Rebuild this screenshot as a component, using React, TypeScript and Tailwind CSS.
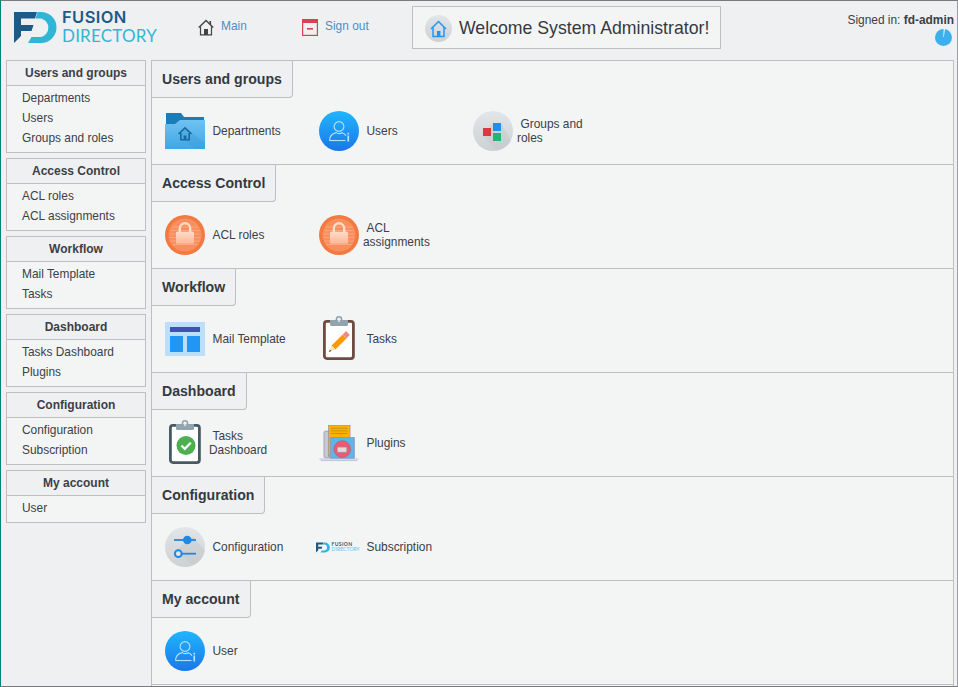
import React from "react";

const Grad = ({ id, from, to }: { id: string; from: string; to: string }) => (
  <defs>
    <linearGradient id={id} x1="0" y1="0" x2="0" y2="1">
      <stop offset="0" stopColor={from} />
      <stop offset="1" stopColor={to} />
    </linearGradient>
  </defs>
);

const UserIconFixed = ({ uid }: { uid: string }) => (
  <svg width="40" height="40" viewBox="0 0 40 40">
    <Grad id={uid} from="#1fb6fe" to="#1b76e8" />
    <circle cx="20" cy="20" r="20" fill={`url(#${uid})`} />
    <g fill="none" stroke="#b8e2fc" strokeWidth="1.1">
      <circle cx="20" cy="15.5" r="4.9" />
      <path d="M10.5 29.5 C10.5 25 13.5 22.6 17.2 21.6 C19 22.8 21.3 22.8 23.2 21.8 C24.8 22.4 26 23.2 27 24.6" />
      <path d="M10.5 29.5 H26.5" />
    </g>
    <rect x="28.4" y="24.5" width="1.7" height="6" fill="#b8e2fc" />
    <rect x="28.4" y="21.8" width="1.7" height="1.7" fill="#b8e2fc" />
  </svg>
);

const LockIcon = ({ uid }: { uid: string }) => (
  <svg width="40" height="40" viewBox="0 0 40 40">
    <Grad id={uid} from="#ffdcc8" to="#fbb795" />
    <circle cx="20" cy="20" r="20" fill="#f27a40" />
    <circle cx="20" cy="20" r="16.5" fill="#f98e5f" />
    <g stroke="#fbab85" strokeWidth="0.9">
      <path d="M7 12 H33 M5.5 15.5 H34.5 M4.5 19 H35.5 M4.5 22.5 H35.5 M5.5 26 H34.5 M7.5 29.5 H32.5" />
    </g>
    <path d="M14.8 17 V13.5 A5.2 5.2 0 0 1 25.2 13.5 V17" fill="none" stroke="#ffdcc8" strokeWidth="2.4" />
    <rect x="11" y="16.8" width="18" height="12" rx="1" fill={`url(#${uid})`} />
  </svg>
);

const GroupsIcon = () => (
  <svg width="40" height="40" viewBox="0 0 40 40">
    <Grad id="gr1" from="#e3e6e8" to="#cdd1d4" />
    <circle cx="20" cy="20" r="20" fill="url(#gr1)" />
    <path d="M10 25 L20 12 L28 12 L38 30 A20 20 0 0 1 24 39.5 Z" fill="#c3c7cb" opacity="0.5" />
    <rect x="10" y="17" width="8" height="8" fill="#dc3545" />
    <rect x="20" y="12" width="8" height="8" fill="#1e90f0" />
    <rect x="20" y="22" width="8" height="8" fill="#22b573" />
  </svg>
);

const FolderIcon = () => (
  <svg width="40" height="36" viewBox="0 0 40 36">
    <Grad id="fo1" from="#70c2f2" to="#3fa6e5" />
    <path d="M1 0 H16 L19 4 H39 V12 H1 Z" fill="#1b7db8" />
    <path d="M0 36 V11 H10 L15 7 H40 V36 Z" fill="url(#fo1)" />
    <path d="M14 21 L20 15 L40 30 V36 H30 Z" fill="#3a9bd8" opacity="0.35" />
    <g fill="none" stroke="#176a9b" strokeWidth="1.6">
      <path d="M13.5 21 L20 14.8 L26.5 21" />
      <path d="M15.8 20 V26.8 H24.2 V20" />
    </g>
    <rect x="18.6" y="22.5" width="2.8" height="4.5" fill="#176a9b" />
  </svg>
);

const MailIcon = () => (
  <svg width="40" height="34" viewBox="0 0 40 34">
    <rect width="40" height="34" fill="#bbdefb" />
    <rect x="5" y="5" width="30" height="5" fill="#3f51b5" />
    <rect x="5" y="14" width="13" height="16" fill="#2196f3" />
    <rect x="22" y="14" width="13" height="16" fill="#2196f3" />
  </svg>
);

const Clip = ({ frame }: { frame: string }) => (
  <>
    <rect x="1.4" y="5.4" width="29" height="37.2" rx="2.5" fill="#fff" stroke={frame} strokeWidth="2.8" />
    <circle cx="16" cy="3.4" r="2.6" fill="none" stroke="#90a4ae" strokeWidth="1.6" />
    <path d="M7 4 H25 V8.5 A1.5 1.5 0 0 1 23.5 10 H8.5 A1.5 1.5 0 0 1 7 8.5 Z" fill="#90a4ae" />
    <circle cx="16" cy="5" r="1.3" fill="#cfd8dc" />
  </>
);

const TasksIcon = () => (
  <svg width="32" height="44" viewBox="0 0 32 44" className="mb-[2px]">
    <Clip frame="#6d4c41" />
    <path d="M8.6 29.6 L12.4 33.4 L23.4 22.4 L19.6 18.6 Z" fill="#ff9800" />
    <path d="M19.6 18.6 L23.4 22.4 L26.9 18.9 L23.1 15.1 Z" fill="#ef8a8a" />
    <path d="M8.6 29.6 L12.4 33.4 L6 36 Z" fill="#ffe0b2" />
    <path d="M6.9 33.7 L8.3 35.1 L6 36 Z" fill="#333" />
  </svg>
);

const TasksDashIcon = () => (
  <svg width="32" height="44" viewBox="0 0 32 44" className="mb-[2px]">
    <Clip frame="#455a64" />
    <circle cx="17" cy="25.5" r="9.5" fill="#4caf50" />
    <path d="M12.4 25.5 L15.8 28.8 L21.8 22.8" fill="none" stroke="#fff" strokeWidth="2.3" />
  </svg>
);

const PluginsIcon = () => (
  <svg width="46" height="44" viewBox="0 0 46 44">
    <path d="M7 8.3 H12 V39 H7 A1.5 1.5 0 0 1 5.7 37.5 V9.5 Z" fill="#c5c9d6" stroke="#8f8fb0" strokeWidth="0.8" />
    <rect x="11" y="1.7" width="24.7" height="35.3" fill="#ffb300" stroke="#9b8f95" strokeWidth="0.8" />
    <path d="M13.5 5 H33 M13.5 8 H33 M13.5 11 H33" stroke="#b8860b" strokeWidth="0.9" />
    <path d="M13 39.7 V15.7 H40.7 V39.7 Z" fill="#5db5e8" stroke="#8f8fb0" strokeWidth="0.8" />
    <circle cx="26.7" cy="29" r="9.6" fill="#ef5a70" stroke="#a9617d" strokeWidth="0.8" />
    <rect x="21" y="26.7" width="11" height="6" rx="1" fill="#e3d9dc" stroke="#8f8fa0" strokeWidth="0.8" />
    <path d="M0.5 40.4 H45.5 M2 42.2 H44" stroke="#a9a9d0" strokeWidth="0.8" />
  </svg>
);

const ConfigIcon = () => (
  <svg width="40" height="40" viewBox="0 0 40 40">
    <Grad id="cf1" from="#e3e6e8" to="#cdd1d4" />
    <circle cx="20" cy="20" r="20" fill="url(#cf1)" />
    <path d="M28 10 L40 24 A20 20 0 0 1 28 38 L10 24 Z" fill="#c3c7cb" opacity="0.5" />
    <path d="M9 13 H31" stroke="#1e88e5" strokeWidth="1.8" />
    <circle cx="22.3" cy="13" r="4.3" fill="#1e88e5" />
    <path d="M17 26.7 H31" stroke="#1e88e5" strokeWidth="1.8" />
    <circle cx="13.3" cy="26.7" r="3.4" fill="#e3e6e8" stroke="#1e88e5" strokeWidth="2" />
  </svg>
);

const LogoMark = () => (
  <>
    <path d="M14 12 H37 L35 18.5 H21 V25 H33.5 L31.5 31 H21 V36 L14 43 Z" fill="#1d5a87" />
    <path d="M37.5 12 H41 A15.5 15.5 0 0 1 41 43 H28 L31.5 37 H41 A9.5 9.5 0 0 0 41 18.5 H35.5 Z" fill="#2fb5d6" />
  </>
);

const SmallLogo = () => (
  <div className="flex items-center shrink-0 w-[46px] gap-[1.5px]">
    <svg width="14" height="11" viewBox="14 11 43 33" className="shrink-0">
      <LogoMark />
    </svg>
    <div className="flex flex-col font-['Lato',sans-serif] text-[5px] leading-[5.5px]">
      <span className="font-bold text-[#1d5a87] tracking-[0.4px]">FUSION</span>
      <span className="text-[#5cc3df] tracking-[0.1px]">DIRECTORY</span>
    </div>
  </div>
);

type Item = { label: string; icon: React.ReactNode };

const sections: { title: string; items: Item[] }[] = [
  {
    title: "Users and groups",
    items: [
      { label: "Departments", icon: <FolderIcon /> },
      { label: "Users", icon: <UserIconFixed uid="u1" /> },
      { label: "Groups and roles", icon: <GroupsIcon /> },
    ],
  },
  {
    title: "Access Control",
    items: [
      { label: "ACL roles", icon: <LockIcon uid="l1" /> },
      { label: "ACL assignments", icon: <LockIcon uid="l2" /> },
    ],
  },
  {
    title: "Workflow",
    items: [
      { label: "Mail Template", icon: <MailIcon /> },
      { label: "Tasks", icon: <TasksIcon /> },
    ],
  },
  {
    title: "Dashboard",
    items: [
      { label: "Tasks Dashboard", icon: <TasksDashIcon /> },
      { label: "Plugins", icon: <PluginsIcon /> },
    ],
  },
  {
    title: "Configuration",
    items: [
      { label: "Configuration", icon: <ConfigIcon /> },
      { label: "Subscription", icon: <SmallLogo /> },
    ],
  },
  {
    title: "My account",
    items: [{ label: "User", icon: <UserIconFixed uid="u2" /> }],
  },
];

const menu: { title: string; items: string[] }[] = [
  { title: "Users and groups", items: ["Departments", "Users", "Groups and roles"] },
  { title: "Access Control", items: ["ACL roles", "ACL assignments"] },
  { title: "Workflow", items: ["Mail Template", "Tasks"] },
  { title: "Dashboard", items: ["Tasks Dashboard", "Plugins"] },
  { title: "Configuration", items: ["Configuration", "Subscription"] },
  { title: "My account", items: ["User"] },
];

export default function App() {
  return (
    <div className="w-[958px] h-[687px] overflow-hidden flex flex-col bg-[#eef0f2] border-l border-l-[#00857c] border-t border-t-[#777b80] border-b border-b-[#777b80] border-r border-r-[#9aa0a5] font-['Liberation_Sans',Arial,sans-serif] text-[11.92px] text-[#3c4046]">
      <header className="h-[59px] shrink-0 flex items-start relative">
        <div className="w-[197px] shrink-0 flex items-start">
          <svg width="43" height="33" viewBox="14 11 43 33" className="ml-[13px] mt-[10px] shrink-0">
            <LogoMark />
          </svg>
          <div className="ml-[5px] mt-[6px] flex flex-col">
            <span className="font-['Inter',sans-serif] text-[16.5px] leading-[20px] font-semibold tracking-[0.4px] text-[#1d5a87]">FUSION</span>
            <span className="font-['Lato',sans-serif] text-[17px] leading-[18px] font-normal tracking-[0.2px] text-[#33b5d8]">DIRECTORY</span>
          </div>
        </div>
        <a className="flex items-center gap-[7px] mt-[17px] w-[104px] text-[#4a90c2]">
          <svg width="16" height="17" viewBox="0 0 16 17" className="shrink-0">
            <path d="M0.8 8.5 L8 1.5 L15.2 8.5" fill="none" stroke="#444" strokeWidth="1.4" />
            <path d="M2.5 7.5 V15.8 H13.5 V7.5" fill="none" stroke="#444" strokeWidth="1.2" />
            <rect x="6" y="10" width="4" height="6" fill="#444" />
            <rect x="11.5" y="2" width="1.6" height="3.5" fill="#444" />
          </svg>
          <span className="pb-[2px]">Main</span>
        </a>
        <a className="flex items-center gap-[7px] mt-[17px] w-[110px] text-[#4a90c2]">
          <svg width="16" height="17" viewBox="0 0 16 17" className="shrink-0">
            <rect x="0.6" y="0.6" width="14.8" height="15.8" fill="none" stroke="#dc3f54" strokeWidth="1.2" />
            <rect x="0.6" y="0.6" width="14.8" height="3.4" fill="#dc3f54" />
            <rect x="5" y="9" width="6" height="1.6" fill="#dc3f54" />
          </svg>
          <span className="pb-[2px]">Sign out</span>
        </a>
        <div className="mt-[5px] w-[309px] h-[43px] border border-[#bdbfc1] bg-[#f3f5f5] flex items-center pl-[12px] pt-[2px] gap-[7px] text-[17.7px] text-[#35393f]">
          <svg width="27" height="27" viewBox="0 0 27 27" className="shrink-0">
            <Grad id="wh1" from="#e3e6e8" to="#cdd1d4" />
            <circle cx="13.5" cy="13.5" r="13.5" fill="url(#wh1)" />
            <path d="M6 14 L13.5 6.5 L21 14" fill="none" stroke="#2496f2" strokeWidth="1.5" />
            <path d="M8 12.5 V21.5 H19 V12.5" fill="none" stroke="#2496f2" strokeWidth="1.5" />
            <rect x="12" y="16" width="3.4" height="5.5" fill="#2496f2" />
          </svg>
          Welcome System Administrator!
        </div>
        <div className="absolute top-[13px] right-[3px] flex flex-col items-end">
          <div className="leading-[13px] whitespace-nowrap">
            Signed in: <span className="font-bold">fd-admin</span>
          </div>
          <svg width="17" height="17" viewBox="0 0 17 17" className="mt-[2px] mr-[2px]">
            <circle cx="8.5" cy="8.5" r="8.5" fill="#3cb0ef" />
            <path d="M9.9 0 L8.9 8 L8.4 8 L8.7 0 Z" fill="#fff" />
          </svg>
        </div>
      </header>
      <div className="flex-1 flex min-h-0">
        <aside className="w-[150px] shrink-0 pl-[5px] flex flex-col gap-[5px]">
          {menu.map((m) => (
            <div key={m.title} className="w-[140px] border border-[#bdbfc1] bg-[#f3f5f5]">
              <div className="h-[25px] border-b border-[#bdbfc1] bg-[#eef0f2] flex items-center justify-center font-bold text-[12px]">
                {m.title}
              </div>
              <ul className="pt-[2px] pb-[4px]">
                {m.items.map((i) => (
                  <li key={i} className="h-[20px] leading-[20px] pl-[15px]">
                    {i}
                  </li>
                ))}
              </ul>
            </div>
          ))}
        </aside>
        <main className="w-[803px] shrink-0 border-l border-r border-[#bdbfc1] bg-[#f3f5f5]">
          {sections.map((s) => (
            <section key={s.title} className="border-t border-[#bdbfc1]">
              <h2 className="w-fit h-[37px] px-[10px] pt-[2px] flex items-center bg-[#eef0f2] border-r border-b border-[#bdbfc1] rounded-br-[4px] text-[14.1px] font-bold text-[#35393f]">
                {s.title}
              </h2>
              <div className="h-[66px] pl-[13px] flex items-center">
                {s.items.map((i) => (
                  <div key={i.label} className="w-[154px] shrink-0 flex items-center">
                    <div className="w-10 h-11 shrink-0 flex items-center justify-center">{i.icon}</div>
                    <div className="ml-[4px] w-[88px] indent-[3.5px] leading-[14px]">{i.label}</div>
                  </div>
                ))}
              </div>
            </section>
          ))}
          <div className="border-t border-[#bdbfc1]" />
        </main>
      </div>
    </div>
  );
}
